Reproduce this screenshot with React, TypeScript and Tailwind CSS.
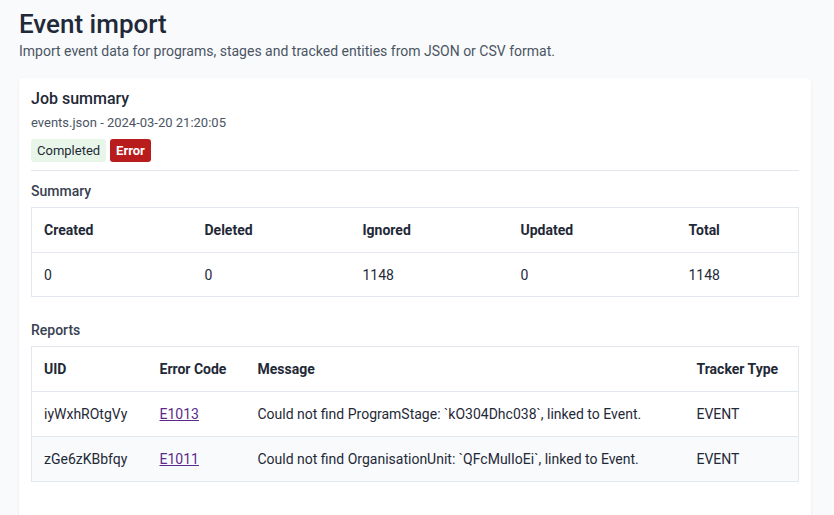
import React from 'react';

type Report = { uid: string; code: string; message: string; trackerType: string };

const summary = [
  { label: 'Created', value: '0', w: 'w-[161px]' },
  { label: 'Deleted', value: '0', w: 'w-[158px]' },
  { label: 'Ignored', value: '1148', w: 'w-[158px]' },
  { label: 'Updated', value: '0', w: 'w-[168px]' },
  { label: 'Total', value: '1148', w: '' },
];

const reports: Report[] = [
  {
    uid: 'iyWxhROtgVy',
    code: 'E1013',
    message: 'Could not find ProgramStage: `kO304Dhc038`, linked to Event.',
    trackerType: 'EVENT',
  },
  {
    uid: 'zGe6zKBbfqy',
    code: 'E1011',
    message: 'Could not find OrganisationUnit: `QFcMulIoEi`, linked to Event.',
    trackerType: 'EVENT',
  },
];

function SummaryTable() {
  return (
    <table className="w-full border border-[#e3e8ee] border-collapse text-sm text-[#1f2937]">
      <thead>
        <tr className="h-[45px] border-b border-[#e3e8ee]">
          {summary.map((s) => (
            <th key={s.label} className={`${s.w} px-3 text-left font-bold`}>
              {s.label}
            </th>
          ))}
        </tr>
      </thead>
      <tbody>
        <tr className="h-[44px]">
          {summary.map((s) => (
            <td key={s.label} className="px-3">
              {s.value}
            </td>
          ))}
        </tr>
      </tbody>
    </table>
  );
}

function ReportsTable() {
  return (
    <table className="w-full border border-[#e3e8ee] border-collapse text-sm text-[#1f2937]">
      <thead>
        <tr className="h-[45px] border-b border-[#e3e8ee]">
          <th className="w-[116px] px-3 text-left font-bold">UID</th>
          <th className="w-[98px] px-3 text-left font-bold">Error Code</th>
          <th className="w-[439px] px-3 text-left font-bold">Message</th>
          <th className="px-3 text-left font-bold">Tracker Type</th>
        </tr>
      </thead>
      <tbody>
        {reports.map((r, i) => (
          <tr
            key={r.uid}
            className={`h-[45px] ${i > 0 ? 'bg-[#f8fafc] border-t border-[#e3e8ee]' : ''}`}
          >
            <td className="px-3">{r.uid}</td>
            <td className="px-3">
              <a href="#" className="text-[#5b2a8c] underline">
                {r.code}
              </a>
            </td>
            <td className="px-3">{r.message}</td>
            <td className="px-3">{r.trackerType}</td>
          </tr>
        ))}
      </tbody>
    </table>
  );
}

export default function App() {
  return (
    <div
      className="min-h-screen bg-[#f8fafc] px-[19px] pt-2 text-[#1f2937]"
      style={{ fontFamily: 'Roboto, "Liberation Sans", sans-serif' }}
    >
      <h1 className="text-[26px] leading-8 font-medium text-[#1f2937]">Event import</h1>
      <p className="mt-[1px] text-sm leading-5 text-[#4b5563]">
        Import event data for programs, stages and tracked entities from JSON or CSV format.
      </p>

      <div className="mt-[17px] w-[792px] rounded bg-white px-3 pt-[9px] pb-10 shadow-[0_1px_3px_rgba(0,0,0,0.08)]">
        <h2 className="text-base leading-6 font-medium">Job summary</h2>
        <div className="mt-[2px] text-[13px] leading-5 text-[#4b5563]">
          events.json - 2024-03-20 21:20:05
        </div>
        <div className="mt-[6px] flex gap-1">
          <span className="flex h-[23px] items-center rounded-[3px] bg-[#e8f5e9] px-[6px] text-[13px] text-[#1f2937]">
            Completed
          </span>
          <span className="flex h-[23px] items-center rounded-[3px] bg-[#b91c1c] px-[6px] text-[13px] font-bold text-white">
            Error
          </span>
        </div>
        <div className="mt-2 border-t border-[#e3e8ee]" />

        <h3 className="mt-[10px] text-sm leading-5 font-medium text-[#374151]">Summary</h3>
        <div className="mt-[6px]">
          <SummaryTable />
        </div>

        <h3 className="mt-[23px] text-sm leading-5 font-medium text-[#374151]">Reports</h3>
        <div className="mt-[6px]">
          <ReportsTable />
        </div>
      </div>
    </div>
  );
}
